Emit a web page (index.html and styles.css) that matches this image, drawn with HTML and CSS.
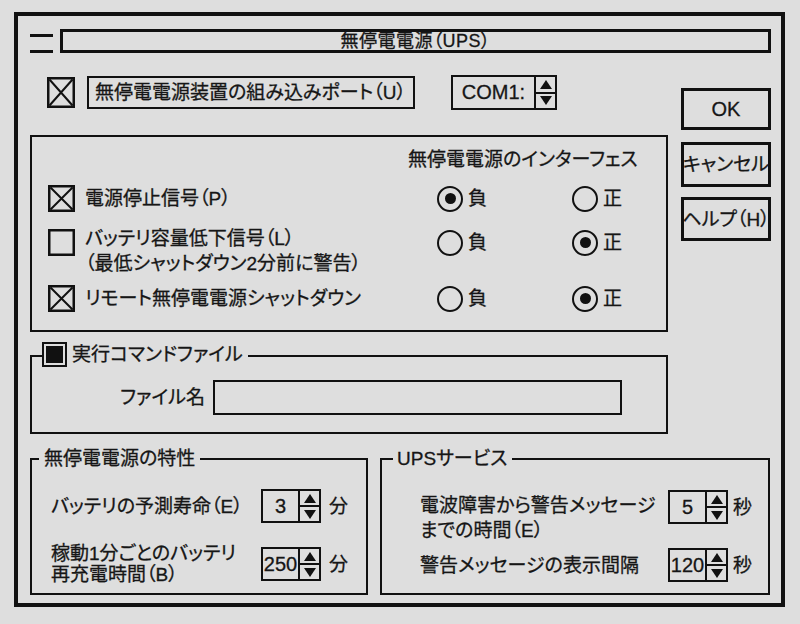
FILE: index.html
```html
<!DOCTYPE html>
<html lang="ja">
<head>
<meta charset="utf-8">
<title>無停電電源（UPS）</title>
<link rel="stylesheet" href="styles.css">
</head>
<body>
<div class="window">
  <div class="titlerow">
    <span class="menu"></span>
    <div class="titlebar">無停電電源（UPS）</div>
  </div>

  <div class="upper">
    <div class="leftcol">
      <div class="portrow">
        <svg class="cb cb-lg" viewBox="0 0 28 31"><rect x="1.25" y="1.25" width="25.5" height="28.5" fill="none" stroke="#111" stroke-width="2.5"/><path d="M2.5 2.5L25.5 28.5M25.5 2.5L2.5 28.5" stroke="#111" stroke-width="2"/></svg>
        <div class="portlabel">無停電電源装置の組み込みポート（U）</div>
        <div class="spin spin-com">
          <span class="spin-val">COM1:</span>
          <span class="spin-btns"><span class="arr"><span class="tri-up"></span></span><span class="arr"><span class="tri-down"></span></span></span>
        </div>
      </div>

      <div class="iface">
        <div class="iface-head">無停電電源のインターフェス</div>
        <div class="iface-grid">
          <svg class="cb" viewBox="0 0 27 27"><rect x="1.25" y="1.25" width="24.5" height="24.5" fill="none" stroke="#111" stroke-width="2.5"/><path d="M2.5 2.5L24.5 24.5M24.5 2.5L2.5 24.5" stroke="#111" stroke-width="2"/></svg>
          <div class="iface-label">電源停止信号（P）</div>
          <div class="radio-cell"><span class="radio on"></span><span>負</span></div>
          <div class="radio-cell"><span class="radio"></span><span>正</span></div>

          <svg class="cb" viewBox="0 0 27 27"><rect x="1.25" y="1.25" width="24.5" height="24.5" fill="none" stroke="#111" stroke-width="2.5"/></svg>
          <div class="iface-label two">バッテリ容量低下信号（L）<br>（最低シャットダウン2分前に警告）</div>
          <div class="radio-cell"><span class="radio"></span><span>負</span></div>
          <div class="radio-cell"><span class="radio on"></span><span>正</span></div>

          <svg class="cb" viewBox="0 0 27 27"><rect x="1.25" y="1.25" width="24.5" height="24.5" fill="none" stroke="#111" stroke-width="2.5"/><path d="M2.5 2.5L24.5 24.5M24.5 2.5L2.5 24.5" stroke="#111" stroke-width="2"/></svg>
          <div class="iface-label">リモート無停電電源シャットダウン</div>
          <div class="radio-cell"><span class="radio"></span><span>負</span></div>
          <div class="radio-cell"><span class="radio on"></span><span>正</span></div>
        </div>
      </div>

      <fieldset class="grp grp-cmd">
        <legend><span class="legend-in"><span class="cb-fill"><span></span></span>実行コマンドファイル</span></legend>
        <div class="filerow">
          <span class="filelabel">ファイル名</span>
          <span class="input"></span>
        </div>
      </fieldset>
    </div>

    <div class="buttons">
      <div class="btn btn-ok">OK</div>
      <div class="btn btn-cancel">キャンセル</div>
      <div class="btn btn-help">ヘルプ（H）</div>
    </div>
  </div>

  <div class="lower">
    <fieldset class="grp grp-char">
      <legend>無停電電源の特性</legend>
      <div class="opt-grid">
        <div class="opt-label">バッテリの予測寿命（E）</div>
        <div class="spin">
          <span class="spin-val">3</span>
          <span class="spin-btns"><span class="arr"><span class="tri-up"></span></span><span class="arr"><span class="tri-down"></span></span></span>
        </div>
        <div class="unit">分</div>

        <div class="opt-label tight">稼動1分ごとのバッテリ<br>再充電時間（B）</div>
        <div class="spin">
          <span class="spin-val">250</span>
          <span class="spin-btns"><span class="arr"><span class="tri-up"></span></span><span class="arr"><span class="tri-down"></span></span></span>
        </div>
        <div class="unit">分</div>
      </div>
    </fieldset>

    <fieldset class="grp grp-ups">
      <legend>UPSサービス</legend>
      <div class="opt-grid">
        <div class="opt-label top">電波障害から警告メッセージ<br>までの時間（E）</div>
        <div class="spin">
          <span class="spin-val">5</span>
          <span class="spin-btns"><span class="arr"><span class="tri-up"></span></span><span class="arr"><span class="tri-down"></span></span></span>
        </div>
        <div class="unit">秒</div>

        <div class="opt-label">警告メッセージの表示間隔</div>
        <div class="spin">
          <span class="spin-val">120</span>
          <span class="spin-btns"><span class="arr"><span class="tri-up"></span></span><span class="arr"><span class="tri-down"></span></span></span>
        </div>
        <div class="unit">秒</div>
      </div>
    </fieldset>
  </div>
</div>
</body>
</html>
```

FILE: styles.css
```css
* { box-sizing: border-box; }
html, body { margin: 0; padding: 0; }
body {
  width: 800px;
  height: 624px;
  overflow: hidden;
  background: #dedede;
  color: #161616;
  font-family: "Liberation Sans", "Noto Sans CJK JP", sans-serif;
  font-size: 19px;
  font-weight: 400;
  font-feature-settings: "palt";
  line-height: 25px;
  -webkit-text-stroke: 0.3px #161616;
}

.window {
  margin: 12px 0 0 14px;
  width: 771px;
  height: 595px;
  border: 4px solid #111;
  padding: 0 10px 0 12px;
  display: flex;
  flex-direction: column;
}

/* title */
.titlerow {
  margin-top: 13px;
  height: 24px;
  display: flex;
  gap: 7px;
}
.menu {
  width: 23px;
  height: 19px;
  margin-top: 5px;
  border-top: 3px solid #111;
  border-bottom: 3px solid #111;
}
.titlebar {
  flex: 1;
  border: 3px solid #111;
  text-align: center;
  font-size: 18px;
  line-height: 19px;
  letter-spacing: 0.5px;
}

/* upper area */
.upper {
  margin-top: 22px;
  display: grid;
  grid-template-columns: 638px 90px;
  column-gap: 13px;
}
.leftcol { display: flex; flex-direction: column; }

.portrow {
  height: 35px;
  display: flex;
  align-items: center;
}
.cb { display: block; width: 27px; height: 27px; }
.cb-lg { width: 28px; height: 31px; margin-left: 17px; }
.portlabel {
  margin-left: 12px;
  width: 328px;
  height: 33px;
  border: 2px solid #111;
  padding-left: 6px;
  line-height: 29px;
  white-space: nowrap;
}

/* spinner */
.spin {
  display: flex;
  width: 60px;
  height: 34px;
  border: 2px solid #111;
}
.spin-com { margin-left: 36px; width: 106px; height: 35px; }
.spin-val {
  flex: 1;
  text-align: center;
  line-height: 30px;
  font-size: 20px;
}
.spin-btns {
  width: 21px;
  border-left: 2px solid #111;
  display: flex;
  flex-direction: column;
}
.arr {
  flex: 1;
  display: flex;
  align-items: center;
  justify-content: center;
}
.arr + .arr { border-top: 2px solid #111; }
.tri-up {
  width: 0; height: 0;
  border-left: 6px solid transparent;
  border-right: 6px solid transparent;
  border-bottom: 9px solid #111;
}
.tri-down {
  width: 0; height: 0;
  border-left: 6px solid transparent;
  border-right: 6px solid transparent;
  border-top: 9px solid #111;
}

/* interface group */
.iface {
  margin-top: 25px;
  height: 197px;
  border: 2px solid #111;
  padding: 10px 0 0 16px;
}
.iface-head { padding-left: 360px; white-space: nowrap; }
.iface-grid {
  margin-top: 13px;
  display: grid;
  grid-template-columns: 27px 362px 135px 1fr;
  grid-template-rows: 44px 56px 27px;
  align-items: start;
}
.iface-label {
  padding-left: 10px;
  margin-top: 1px;
  white-space: nowrap;
}
.iface-label.two { margin-top: -3px; }
.radio-cell {
  height: 27px;
  display: flex;
  align-items: center;
  gap: 5px;
}
.radio {
  width: 26px;
  height: 26px;
  border: 2.5px solid #111;
  border-radius: 50%;
  display: flex;
  align-items: center;
  justify-content: center;
}
.radio.on::after {
  content: "";
  width: 11px;
  height: 11px;
  border-radius: 50%;
  background: #111;
}

/* group boxes */
.grp {
  margin: 0;
  padding: 0;
  min-width: 0;
  border: 2px solid #111;
}
.grp legend {
  padding: 0 5px;
  line-height: 25px;
  white-space: nowrap;
}
.grp-cmd { margin-top: 10px; }
.grp-cmd legend { margin-left: 10px; padding: 0 5px 0 0; }
.legend-in { display: inline-flex; align-items: center; gap: 5px; }
.cb-fill {
  width: 25px;
  height: 25px;
  border: 2.5px solid #111;
  padding: 2px;
  display: flex;
}
.cb-fill span { flex: 1; background: #111; }

.filerow {
  margin-top: 11px;
  padding-bottom: 17px;
  display: flex;
  align-items: center;
}
.filelabel { width: 173px; text-align: right; }
.input {
  margin-left: 8px;
  width: 409px;
  height: 35px;
  border: 2px solid #111;
}

/* buttons */
.buttons {
  padding-top: 13px;
  display: flex;
  flex-direction: column;
}
.btn {
  border: 3px solid #111;
  display: flex;
  align-items: center;
  justify-content: center;
  white-space: nowrap;
}
.btn-ok { height: 42px; font-size: 20px; }
.btn-cancel { height: 45px; margin-top: 12px; }
.btn-help { height: 44px; margin-top: 10px; }

/* lower groups */
.lower {
  margin-top: 12px;
  display: flex;
  gap: 12px;
}
.grp-char { width: 338px; padding-bottom: 11px; }
.grp-char legend { margin-left: 7px; }
.grp-ups { width: 390px; padding-bottom: 11px; }
.grp-ups legend { margin-left: 11px; padding: 0 5px 0 4px; }

.opt-grid {
  display: grid;
  grid-template-rows: 34px 34px;
  row-gap: 24px;
  align-items: center;
}
.grp-char .opt-grid { margin: 18px 0 0 19px; grid-template-columns: 210px 60px auto; }
.grp-ups .opt-grid { margin: 19px 0 0 38px; grid-template-columns: 248px 60px auto; }
.opt-label { white-space: nowrap; }
.opt-label.tight { line-height: 21px; }
.opt-label.top { align-self: start; margin-top: 3px; }
.unit { margin-left: 8px; }
.grp-ups .unit { margin-left: 5px; }
```
